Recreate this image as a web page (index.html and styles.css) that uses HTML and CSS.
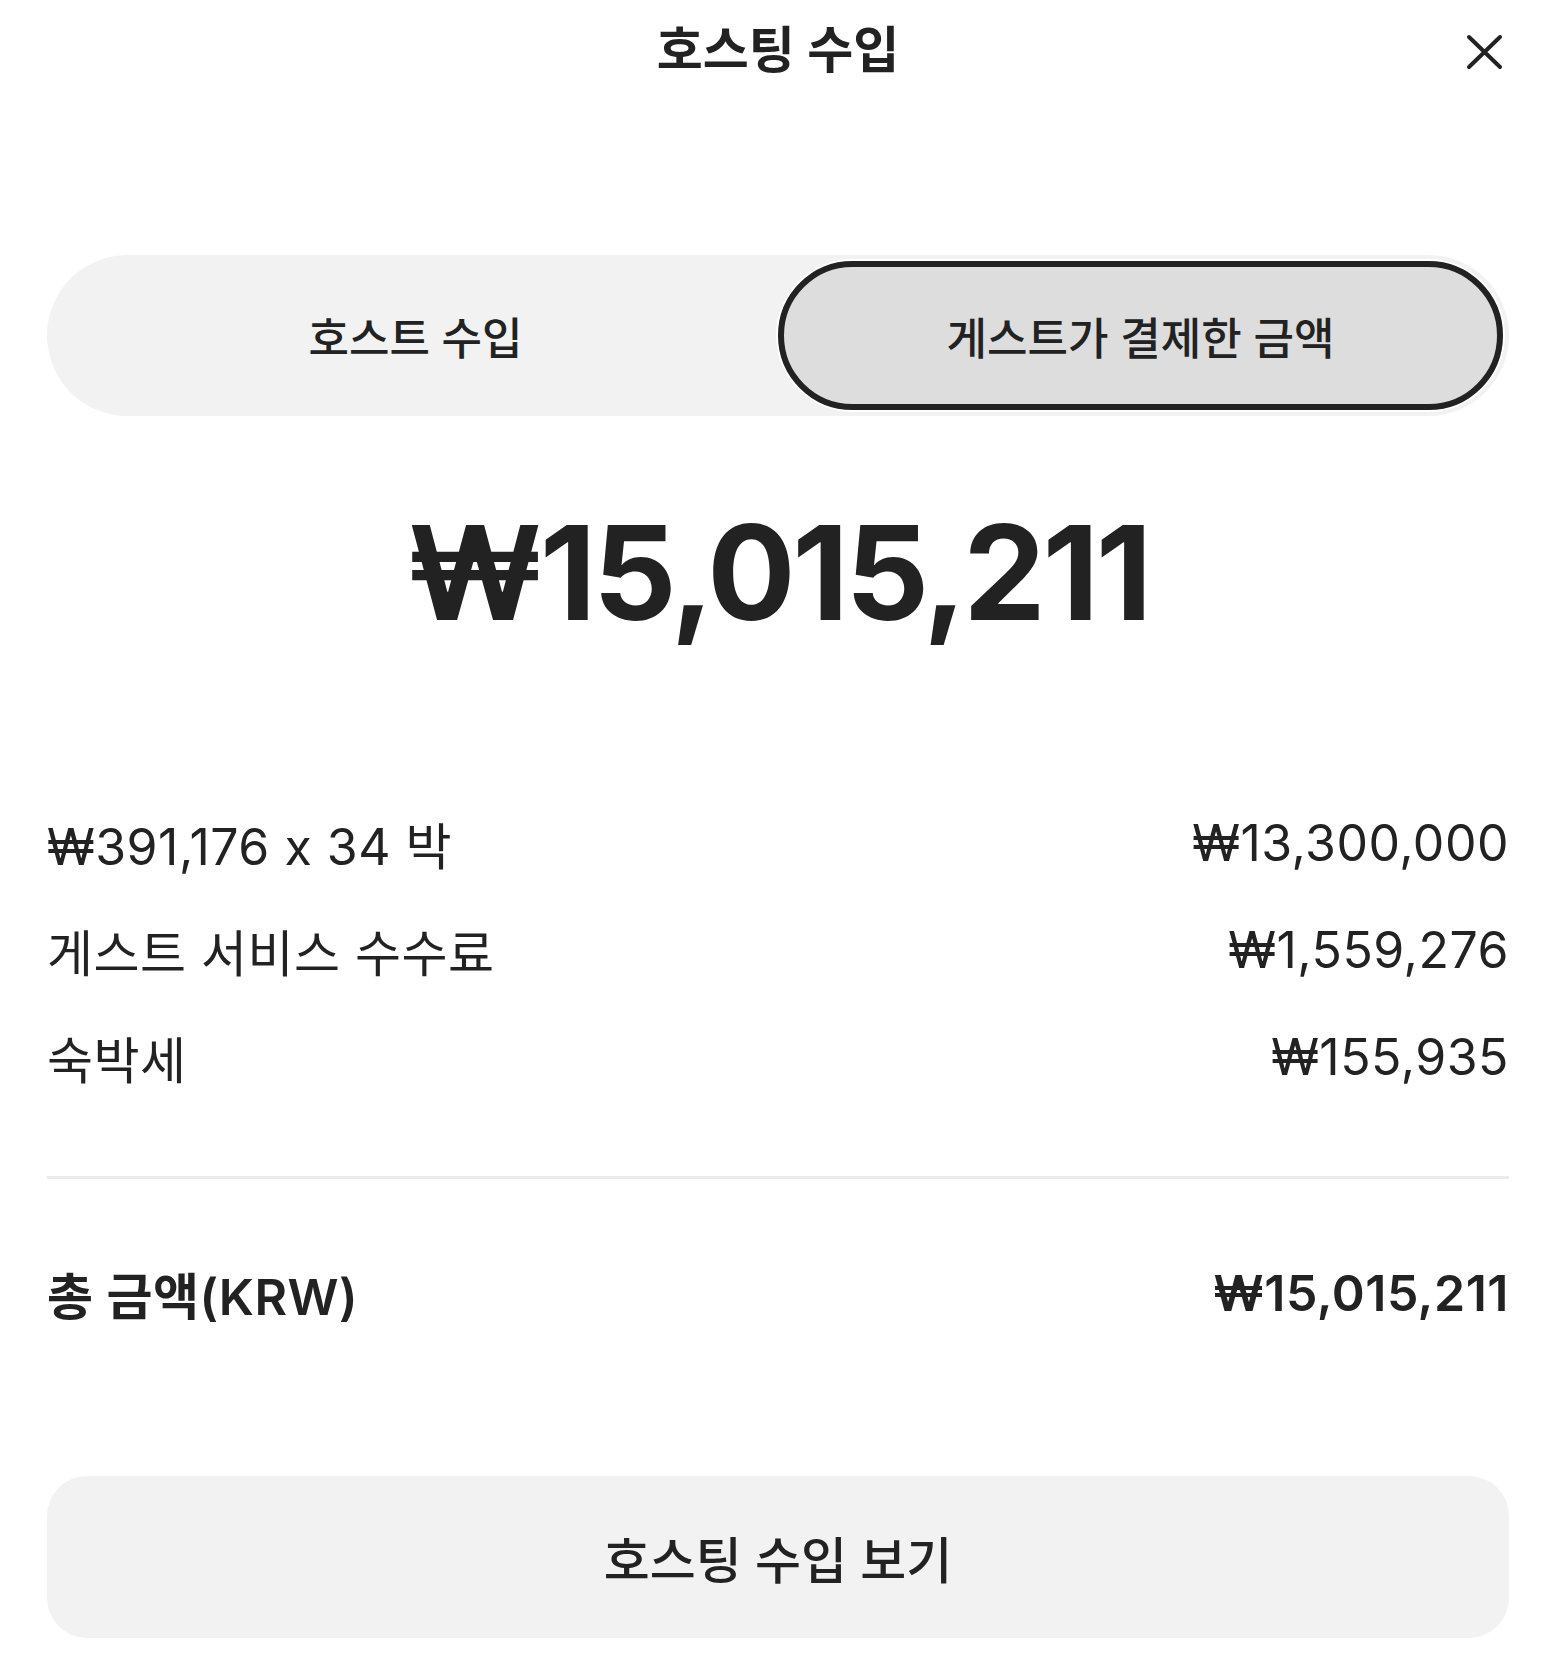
FILE: index.html
```html
<!DOCTYPE html>
<html lang="ko">

<head>
    <meta charset="UTF-8">
    <meta name="viewport" content="width=device-width, initial-scale=1.0">
    <title>호스팅 수입</title>
    <link rel="stylesheet" href="styles.css">
</head>

<body>
    <!-- 상단 헤더 -->
    <header class="top">
        <span></span>
        <h1 class="tit">호스팅 수입</h1>
        <button class="cbtn" type="button" aria-label="닫기">
            <svg width="37" height="36" viewBox="0 0 37 36">
                <path d="M3 3 L34 33 M34 3 L3 33" stroke="#222" stroke-width="4" stroke-linecap="round" fill="none" />
            </svg>
        </button>
    </header>

    <!-- 토글 -->
    <div class="tabs">
        <button class="tab" type="button">호스트 수입</button>
        <button class="tab on" type="button">게스트가 결제한 금액</button>
    </div>

    <!-- 큰 금액 -->
    <p class="amount">₩15,015,211</p>

    <!-- 상세내역 -->
    <ul class="list">
        <li class="row">
            <span>₩391,176 x 34 박</span>
            <span>₩13,300,000</span>
        </li>
        <li class="row">
            <span>게스트 서비스 수수료</span>
            <span>₩1,559,276</span>
        </li>
        <li class="row">
            <span>숙박세</span>
            <span>₩155,935</span>
        </li>
    </ul>

    <hr class="line">

    <div class="row total">
        <span>총 금액(KRW)</span>
        <span>₩15,015,211</span>
    </div>

    <!-- 하단버튼 -->
    <button class="more" type="button">호스팅 수입 보기</button>
</body>

</html>
```

FILE: styles.css
```css
html,
body {
    margin: 0;
    padding: 0;
}

body {
    padding: 0 45px 0 47px;
    background-color: #fff;
    color: #222;
    font-family: Inter, "Noto Sans CJK KR", sans-serif;
    /* 숫자 사이 x가 ×로 바뀌지 않게 */
    font-feature-settings: "calt" 0;
}

/* ul초기화 */
ul {
    margin: 0;
    padding: 0;
    list-style: none;
}

button {
    font-family: inherit;
    font-feature-settings: inherit;
    color: inherit;
    border: 0;
    padding: 0;
    margin: 0;
    cursor: pointer;
}

/* 헤더 */
.top {
    display: grid;
    grid-template-columns: 1fr auto 1fr;
    align-items: center;
    height: 100px;
}

.tit {
    margin: 0;
    font-size: 50px;
    font-weight: 600;
    line-height: 100px;
}

/* 닫기버튼 */
.cbtn {
    justify-self: end;
    display: flex;
    margin-right: 6px;
    margin-top: 3px;
    background: none;
}

/* 토글 */
.tabs {
    display: grid;
    grid-template-columns: 1fr 1fr;
    height: 161px;
    box-sizing: border-box;
    margin-top: 155px;
    padding: 6px;
    background-color: #f2f2f2;
    border-radius: 999px;
}

.tab {
    font-size: 44px;
    font-weight: 500;
    background: none;
    border-radius: 999px;
}

.tab.on {
    background-color: #ddd;
    border: 6px solid #222;
    box-shadow: 0 0 0 2px #fff;
}

/* 큰 금액 */
.amount {
    margin: 91px 0 0;
    text-align: center;
    font-size: 131px;
    font-weight: 700;
    line-height: 1;
    letter-spacing: -0.025em;
}

.list {
    margin-top: 151px;
}

.row {
    display: flex;
    justify-content: space-between;
    align-items: center;
    height: 107px;
    font-size: 50px;
    letter-spacing: 0.01em;
}

/* 구분선 */
.line {
    margin: 66px 0 0;
    height: 3px;
    border: 0;
    background-color: #ebebeb;
}

.total {
    margin-top: 60px;
    font-weight: 600;
}

/* 하단버튼 */
.more {
    display: block;
    width: 100%;
    height: 162px;
    margin-top: 130px;
    background-color: #f2f2f2;
    border-radius: 40px;
    font-size: 50px;
    font-weight: 500;
}
```
